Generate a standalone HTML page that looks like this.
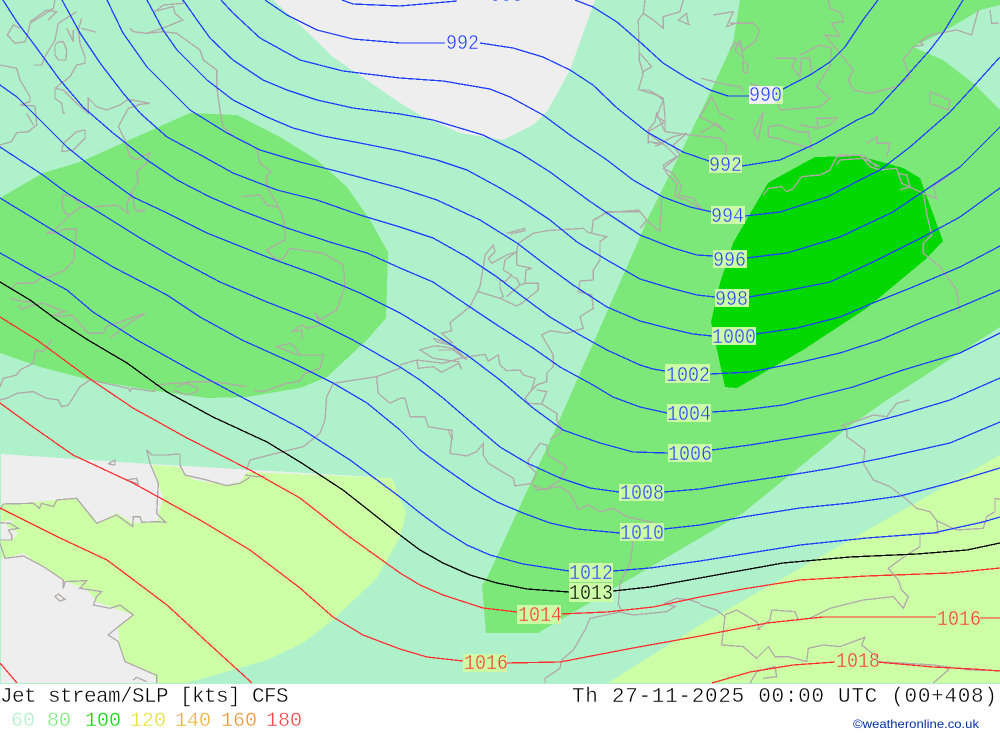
<!DOCTYPE html>
<html><head><meta charset="utf-8"><style>
html,body{margin:0;padding:0;background:#fff;width:1000px;height:733px;overflow:hidden}
svg{display:block}
.iso polyline{fill:none;stroke-width:1.3;stroke-linejoin:round}
.coast polyline{fill:none;stroke:#b2a9a9;stroke-width:4}
text{font-family:"Liberation Mono",monospace}
.l text{font-size:21px;stroke:#ccffa6;stroke-width:.45px}
.f{font-size:21px;stroke:#fff;stroke-width:.45px}
.lg{font-size:20px;stroke:#fff;stroke-width:.4px}
</style></head><body>
<svg width="1000" height="733" viewBox="0 0 1000 733" xmlns="http://www.w3.org/2000/svg">
<rect width="1000" height="684" fill="#aef1ca"/>
<g shape-rendering="crispEdges">
<polygon fill="#eeeeee" points="273,0 300,25 333,57 377,87 400,103 420,115 460,133 503,140 533,125 548,110 570,70 595,0"/>
<polygon fill="#7de87a" points="0,198 43,173 80,162 190,113 237,115 280,137 317,160 347,187 370,220 388,252 387,287 386,318 367,340 353,353 327,377 300,388 247,397 207,398 150,390 90,380 40,367 0,353"/>
<polygon fill="#7de87a" points="740,0 733,43 710,93 687,140 647,220 640,237 555,430 487,578 482,585 486,633 538,633 700,538 743,513 790,475 847,428 887,400 1000,327 1000,110 973,83 943,60 913,47 943,32 980,10 1000,5 1000,0"/>
<polygon fill="#00d800" points="815,157 860,156 903,168 920,178 943,241 927,258 867,308 803,350 737,388 725,387 711,322 720,283 733,243 768,183 773,180"/>
<polygon fill="#eeeeee" points="1,454 150,464 392,478 392,510 150,560 1,560"/>
<polygon fill="#ccffa6" points="1,505 77,498 98,523 117,513 133,523 157,522 163,497 152,465 180,467 183,473 195,480 225,485 240,482 247,472 392,478 406,513 400,537 377,578 333,620 303,643 267,660 187,683 158,683 152,673 125,662 120,647 118,627 133,615 97,602 87,590 63,580 43,567 23,553 7,558 1,558"/>
<polygon fill="#eeeeee" points="1,558 7,558 23,553 43,567 63,580 87,590 97,602 133,615 118,627 120,647 125,662 152,673 158,683 1,683"/>
<polygon fill="#eeeeee" points="1,522 15,519 6,526 18,533 12,540 1,540"/>
<polygon fill="#ccffa6" points="608,683 700,625 1000,455 1000,683"/>
</g>
<g class="coast" shape-rendering="crispEdges">
<g transform="scale(.3333)">
<polyline points="165,0 160,25 145,35 90,70 85,95 75,125 45,130 22,105 40,75 60,85"/>
<polyline points="145,60 170,35 140,30 90,65"/>
<polyline points="100,195 125,195 135,170 165,120 175,70 230,35"/>
<polyline points="175,125 190,125 200,150 198,180 175,180 165,165 165,135 175,125"/>
<polyline points="245,55 235,90 240,130 255,170 255,190 230,195 210,230 185,250 165,265 165,295 185,310 190,340 195,340"/>
<polyline points="245,85 290,97"/><polyline points="200,85 220,125 220,90"/>
<polyline points="0,195 50,205 60,240 90,290 90,305 60,315 105,318 110,375 85,395 50,398 35,425 0,435"/>
<polyline points="80,340 100,375"/>
<polyline points="165,265 190,270 230,310 265,340 265,295 290,320 320,330 360,315 385,298 450,310 420,313 385,325 355,380 375,420 390,470 410,478 450,458 440,490 410,515 415,545 395,575 405,630 438,630 410,637"/>
<polyline points="255,390 255,415 220,450 185,455 190,430 230,395 255,390"/>
<polyline points="390,85 400,95 440,100 490,95 530,100 600,150 610,180 650,210 650,260 660,330 670,380 700,410 770,445 780,490 815,515 800,525 800,560 830,610 835,622 800,615 780,585 725,590"/>
<polyline points="835,622 845,640 855,680 855,720 800,750 830,780 850,775 870,745 970,760 1030,795 1035,860 1010,930 960,960 945,938 960,975 925,985 905,975 875,995 905,990 908,1020"/>
<polyline points="460,35 520,20 525,40 548,60 500,80 440,100"/><polyline points="548,0 550,10 490,15 465,35"/>
<polyline points="240,610 215,590 190,585 185,610 195,640 210,645 240,622 270,622 350,615 385,640 380,615 395,575"/>
<polyline points="210,645 170,685 140,700 170,700 190,688 230,688 225,730 222,780 195,810 150,830 130,830 100,850 50,850 30,870"/>
<polyline points="30,895 70,905 100,905"/><polyline points="55,915 65,928 100,915 130,910 195,935 160,945 185,950 215,945 265,1000 310,1000 320,980 435,940 380,975 330,1015"/>
</g>
<g transform="translate(0,340) scale(.3333)">
<polyline points="105,30 100,70 60,90 50,105 10,115 0,140"/><polyline points="105,30 130,35 155,0"/>
<polyline points="0,180 20,175 50,160 100,155 140,175 175,180 185,200 205,195 240,140 270,120 340,135 385,145 390,155 395,145 465,155 465,135 520,130 590,125 640,125 740,140"/>
<polyline points="520,150 560,165 590,155 595,145 560,130 530,140"/>
<polyline points="760,150 790,155 860,130 895,125 915,100 960,85 970,45 900,45 880,40 830,20 870,10 885,20 900,45"/>
<polyline points="740,390 750,360 850,335 910,320 960,280 975,240 980,170 1000,130 1130,110 1200,85"/>
<polyline points="1130,110 1135,160 1170,190 1200,175"/><polyline points="735,405 770,410 795,408"/>
<polyline points="440,330 455,345 500,345 540,342 540,375 555,405 620,420 680,437 720,430 750,412"/>
<polyline points="440,330 450,370 475,430 470,520 497,547 470,545 425,547 420,530 400,530 398,560 350,525 290,550 230,475 170,480 160,500 125,490 118,505 100,490 10,492 0,510"/>
<polyline points="325,372 345,360 345,375 325,372"/><polyline points="380,420 410,415 415,432 380,420"/>
<polyline points="0,548 30,550 55,565 25,570 35,585 35,600 0,600"/>
<polyline points="0,610 15,655 70,648 130,680 190,720 190,745 195,725 260,722 240,745 305,755 290,770 280,795 330,805 360,795 400,825 355,860 325,885 355,905 375,965 455,1000 470,1005 470,1029"/>
<polyline points="165,770 175,762 195,778 180,783 165,770"/><polyline points="400,1020 410,1012 440,1025"/>
</g>
<g transform="translate(400,200) scale(.3333)">
<polyline points="320,100 375,85 375,92 330,102"/>
<polyline points="250,200 240,260 230,280 210,320 150,368 155,392 125,400 160,430"/>
<polyline points="250,200 255,165 280,135 285,155 265,175 275,190 320,165 350,155 355,130 400,100 440,92 550,85 560,95 575,100 620,110 600,125 600,180 580,210 580,240 540,243 535,275 575,285 580,325 540,350 550,385 500,400 450,392 425,405 460,465 460,500 440,520 440,545 410,555 395,570 375,595 385,610 425,612 440,575 410,570"/>
<polyline points="575,100 580,60 620,38 720,30"/>
<polyline points="350,155 315,180 310,210 335,225 315,245 300,240 300,265 310,290 300,295 235,275 300,295 350,318 365,310 415,270 415,250 375,250 360,255 320,290 360,255 350,235 335,230"/>
<polyline points="375,250 378,210 395,205 350,195 350,155"/>
<polyline points="0,495 50,480 130,490 180,475 210,470 255,463 265,483 295,465 300,495 320,512 360,510 370,525 405,535 395,570"/>
<polyline points="50,480 55,505 100,500 125,517 175,490 185,508 175,485 100,475 60,450 100,438 130,440 175,450"/>
<polyline points="115,450 160,450 200,480 150,430 100,415 110,425 170,440"/>
<polyline points="0,595 15,595 30,650 75,650 85,680 130,688 155,690 158,718"/>
<polyline points="425,612 470,640 470,660 485,685 480,700 450,718"/>
</g>
<g transform="translate(400,0) scale(.3333)">
<polyline points="735,0 730,40 760,60 790,85 790,50 840,35 850,0"/>
<polyline points="730,40 715,60 718,180 730,220 715,270 745,270 790,295 795,350 795,395 770,340 765,365 745,390 745,430"/>
<polyline points="795,395 870,405 960,415 980,440 975,470"/><polyline points="720,160 755,200 725,218"/>
<polyline points="760,430 790,430 765,438"/>
<polyline points="745,400 800,440 830,470 790,495 800,520 830,550 825,590 860,600 910,630"/>
<polyline points="865,70 860,40 835,60 870,75"/><polyline points="940,45 1000,35 980,80 1020,65"/>
<polyline points="1020,120 1005,150 1030,175 1020,120"/><polyline points="905,235 960,250 1020,260 1030,275"/>
<polyline points="900,400 950,370 975,395 940,370 900,350 935,290 960,340 1000,360"/>
<polyline points="585,660 620,635 720,635 740,660"/>
</g>
<g transform="translate(730,0) scale(.3333)">
<polyline points="295,0 300,25 335,40 340,65 305,70 330,110 285,105 370,210 355,240 370,270 420,280 500,260 540,230 520,180 550,140 580,135 570,125 600,105 680,90 725,105 745,30"/>
<polyline points="780,30 785,70 805,70"/><polyline points="600,275 660,300 655,330 600,310 600,275"/>
<polyline points="135,175 200,175 185,200 210,230 215,175 240,175 245,220"/>
<polyline points="0,70 70,70 90,90 75,125 40,150 15,125 0,150"/><polyline points="40,180 55,195 50,220 40,215 40,180"/>
<polyline points="210,165 270,135 305,145 300,185"/>
<polyline points="305,190 260,260 300,295 270,320 210,325 150,330 125,270 60,250"/>
<polyline points="100,335 70,395 85,420 100,335"/>
<polyline points="115,380 150,375 200,395 235,395 245,445 190,430 140,415 115,410 115,380"/>
<polyline points="210,375 265,385 260,355 320,355 300,375 265,385"/>
<polyline points="320,465 400,465 440,500"/><polyline points="410,430 440,410 440,430 480,430 470,470"/>
</g>
<g transform="translate(640,80) scale(.3333)">
<polyline points="370,345 385,325 425,320 440,335 460,325 485,290 540,285 570,270 590,230 660,225 690,260 720,270 770,265 785,310 850,340 860,400 875,465 850,490 850,520 900,560 950,630 960,700"/>
<polyline points="775,280 800,285 810,320 780,330"/><polyline points="850,340 890,355 880,320 960,260"/>
<polyline points="590,255 600,240 670,235 720,260"/>
<polyline points="0,30 50,45 70,60 50,110 75,125 25,155 25,185 60,190 100,170 140,160 100,195 120,225 70,265 100,280 125,320 115,345 160,355 190,395"/>
<polyline points="65,355 60,455 20,420 0,445"/>
</g>
<g transform="translate(400,430) scale(.3333)">
<polyline points="145,0 155,25 150,70 200,78 230,65 250,40 250,75 265,100 340,145 345,168 395,160 410,130 385,105 385,90 420,40 440,45 445,75 500,110 480,150 435,180 400,165 410,180 480,170 510,190 535,238 565,225 600,245 640,235 680,260 760,278 700,330 690,400 660,460 655,520 665,545 570,565 555,600 520,660 485,690 480,715 435,745 435,759"/>
<polyline points="655,545 700,555 800,545 825,530 795,520 830,505 870,510 900,520"/>
</g>
<g transform="translate(700,400) scale(.3333)">
<polyline points="425,75 440,90 440,110 495,150 490,190 520,240 570,260 610,290 650,325 690,335 710,362 770,390 850,385 860,350 885,335 885,295 900,298"/>
<polyline points="710,365 715,400 660,400 660,440 620,465 565,505 595,540 605,570 625,590 610,625 580,590 490,600 390,625 330,655 295,660 285,635 215,630 210,660 170,690"/>
<polyline points="0,615 50,630 75,650 65,735 130,740 170,775 205,740 225,770 265,770 320,785 325,745 370,735 420,740 495,712 485,735 530,770 530,785 700,795 810,810 900,812"/>
<polyline points="75,645 110,630 170,665 180,690"/><polyline points="150,850 170,815 225,800 230,830 190,835"/>
<polyline points="700,849 745,810 745,805"/><polyline points="430,75 480,60 520,45 560,50 590,10 630,0"/>
</g>
</g>
<g class="iso" shape-rendering="crispEdges" stroke="#2040ff">
<polyline points="342,0 353,4 400,6 457,1"/>
<polyline points="575,0 593,7 617,22 640,42 663,63 687,78 710,90 728,96 750,96"/>
<polyline points="783,89 810,75 830,62 845,47 863,20 878,0"/>
<polyline points="265,0 287,15 317,30 353,39 400,43 445,43"/>
<polyline points="480,43 513,48 543,57 570,70 593,85 617,108 647,132 683,152 709,161"/>
<polyline points="742,166 780,160 817,143 857,120 873,113 897,87 930,50 943,33 963,0"/>
<polyline points="221,0 233,13 260,38 300,60 343,71 400,78 443,81 490,89 510,97 543,115 570,135 607,160 633,180 663,197 690,207 712,212"/>
<polyline points="745,216 780,212 827,197 860,180 880,170 910,147 950,112 973,87 1000,57"/>
<polyline points="183,0 197,20 210,38 233,60 263,80 287,90 317,100 353,108 400,114 433,120 483,135 520,153 550,172 588,200 607,213 640,235 673,248 697,255 713,256"/>
<polyline points="747,258 787,253 840,237 893,212 930,187 960,167 1000,127"/>
<polyline points="147,0 163,30 177,50 207,80 233,100 267,117 293,128 323,136 360,143 400,151 437,160 467,170 500,188 520,200 550,220 577,242 607,260 640,279 670,288 697,295 715,297"/>
<polyline points="749,297 790,290 830,282 873,262 923,237 960,217 1000,188"/>
<polyline points="107,0 123,33 147,67 167,87 190,110 227,133 260,150 300,162 340,172 400,188 437,200 480,220 517,243 543,263 573,285 607,307 640,321 667,328 693,334 712,336"/>
<polyline points="756,334 797,328 840,317 873,303 913,287 960,267 1000,246"/>
<polyline points="62,0 80,33 100,63 123,93 140,113 167,137 197,153 233,173 277,190 317,200 360,215 400,227 433,238 467,257 497,277 523,297 550,317 580,335 607,350 640,365 653,369 665,371"/>
<polyline points="710,374 750,372 797,363 840,353 880,340 927,320 960,307 1000,290"/>
<polyline points="3,0 17,22 33,43 60,80 83,107 113,133 147,160 177,180 210,197 240,210 287,228 333,243 367,253 400,268 433,282 467,305 497,325 533,348 560,367 593,385 613,397 640,407 667,413"/>
<polyline points="712,412 743,410 783,405 805,399 853,387 903,370 960,353 1000,333"/>
<polyline points="0,85 17,97 37,117 67,147 93,168 133,197 167,213 207,233 267,257 317,275 360,293 400,313 433,333 467,355 500,380 533,408 563,430 600,443 633,452 668,453"/>
<polyline points="712,450 750,445 793,438 847,429 900,415 950,400 1000,378"/>
<polyline points="0,147 23,162 43,175 67,193 100,213 140,238 173,257 220,282 267,302 313,320 353,340 400,367 420,380 443,398 480,430 500,447 527,463 560,478 590,488 619,492"/>
<polyline points="664,492 700,489 743,482 790,475 833,468 883,458 950,443 1000,422"/>
<polyline points="0,198 33,218 77,245 113,267 167,295 200,317 242,340 293,363 333,383 367,403 400,430 420,450 443,467 473,488 497,502 523,513 550,523 577,529 620,533"/>
<polyline points="664,529 700,525 743,517 800,508 850,503 900,496 950,483 1000,468"/>
<polyline points="0,253 43,277 67,290 93,312 137,340 187,368 247,400 300,428 350,460 400,497 420,513 443,530 467,545 490,555 523,564 569,571"/>
<polyline points="613,571 650,568 700,561 750,553 800,545 867,538 933,533 983,522 1000,517"/>
</g>
<g class="iso" shape-rendering="crispEdges" stroke="#000">
<polyline points="0,282 30,300 57,320 88,340 127,363 167,392 213,417 267,442 300,462 343,490 400,535 420,550 443,563 470,575 497,583 527,589 569,592"/>
<polyline points="613,591 650,587 700,578 733,572 783,563 850,557 917,554 967,550 1000,543"/>
</g>
<g class="iso" shape-rendering="crispEdges" stroke="#ff3030">
<polyline points="0,317 37,340 90,379 133,408 187,438 250,470 300,498 347,535 400,573 420,585 443,595 483,608 517,612"/>
<polyline points="561,614 607,612 653,607 700,597 743,589 800,580 867,576 950,573 1000,568"/>
<polyline points="0,403 33,427 73,455 133,483 200,520 250,550 300,588 333,617 363,635 400,649 427,657 463,661"/>
<polyline points="507,663 560,662 633,648 700,636 767,623 823,617 913,617 936,617"/>
<polyline points="980,618 1000,618"/>
<polyline points="0,508 60,538 107,560 167,605 207,642 252,683"/>
<polyline points="712,683 750,672 793,665 835,662"/>
<polyline points="877,662 933,667 973,669 1000,671"/>
<polyline points="0,663 17,683"/>
</g>
<g shape-rendering="crispEdges">
<rect x="749" y="86" width="34" height="18" fill="#f0f0f0"/><rect x="775" y="86" width="8" height="18" fill="#ccffa6"/>
<rect x="709" y="155" width="33" height="18" fill="#ccffa6"/>
<rect x="711" y="206" width="34" height="18" fill="#ccffa6"/>
<rect x="713" y="250" width="34" height="18" fill="#ccffa6"/>
<rect x="715" y="289" width="34" height="18" fill="#ccffa6"/>
<rect x="712" y="327" width="44" height="18" fill="#ccffa6"/>
<rect x="665" y="364" width="45" height="19" fill="#ccffa6"/>
<rect x="667" y="404" width="44" height="18" fill="#ccffa6"/>
<rect x="668" y="444" width="44" height="18" fill="#ccffa6"/>
<rect x="619" y="484" width="45" height="17" fill="#ccffa6"/>
<rect x="620" y="523" width="44" height="18" fill="#ccffa6"/>
<rect x="569" y="563" width="44" height="19" fill="#ccffa6"/>
<rect x="569" y="583" width="44" height="19" fill="#ccffa6"/>
<rect x="517" y="605" width="44" height="19" fill="#ccffa6"/>
<rect x="463" y="654" width="44" height="18" fill="#ccffa6"/>
</g>
<g class="l" fill="#2040ff">
<text x="490" y="1" textLength="33" lengthAdjust="spacingAndGlyphs" style="stroke:#eee">990</text>
<text x="446" y="49" textLength="33" lengthAdjust="spacingAndGlyphs" style="stroke:#eee">992</text>
<text x="749" y="101" textLength="33" lengthAdjust="spacingAndGlyphs" style="stroke:#f0f0f0">990</text>
<text x="709" y="171" textLength="33" lengthAdjust="spacingAndGlyphs">992</text>
<text x="711" y="222" textLength="33" lengthAdjust="spacingAndGlyphs">994</text>
<text x="713" y="266" textLength="33" lengthAdjust="spacingAndGlyphs">996</text>
<text x="715" y="305" textLength="33" lengthAdjust="spacingAndGlyphs">998</text>
<text x="712" y="343" textLength="44" lengthAdjust="spacingAndGlyphs">1000</text>
<text x="666" y="381" textLength="44" lengthAdjust="spacingAndGlyphs">1002</text>
<text x="667" y="420" textLength="44" lengthAdjust="spacingAndGlyphs">1004</text>
<text x="668" y="460" textLength="44" lengthAdjust="spacingAndGlyphs">1006</text>
<text x="620" y="499" textLength="44" lengthAdjust="spacingAndGlyphs">1008</text>
<text x="620" y="539" textLength="44" lengthAdjust="spacingAndGlyphs">1010</text>
<text x="569" y="579" textLength="44" lengthAdjust="spacingAndGlyphs">1012</text>
<text x="569" y="599" textLength="44" lengthAdjust="spacingAndGlyphs" fill="#000">1013</text>
<text x="518" y="621" textLength="44" lengthAdjust="spacingAndGlyphs" fill="#ff3030">1014</text>
<text x="464" y="669" textLength="44" lengthAdjust="spacingAndGlyphs" fill="#ff3030">1016</text>
<text x="937" y="625" textLength="44" lengthAdjust="spacingAndGlyphs" fill="#ff3030">1016</text>
<text x="836" y="667" textLength="44" lengthAdjust="spacingAndGlyphs" fill="#ff3030">1018</text>
</g>
<text class="f" x="0" y="702" letter-spacing="-.6">Jet stream/SLP [kts] CFS</text>
<text class="f" x="572" y="702" letter-spacing=".7">Th 27-11-2025 00:00 UTC (00+408)</text>
<g class="lg">
<text x="11" y="726" fill="#aef1ca">60</text>
<text x="47" y="726" fill="#7de87a">80</text>
<text x="85" y="726" fill="#00d800">100</text>
<text x="130" y="726" fill="#e8e030">120</text>
<text x="175" y="726" fill="#e8b030">140</text>
<text x="221" y="726" fill="#f09030">160</text>
<text x="266" y="726" fill="#f84040">180</text>
</g>
<text x="853" y="728" font-size="12" fill="#0030a0" style="font-family:'Liberation Sans',sans-serif" textLength="126" lengthAdjust="spacingAndGlyphs">©weatheronline.co.uk</text>
</svg>
</body></html>
